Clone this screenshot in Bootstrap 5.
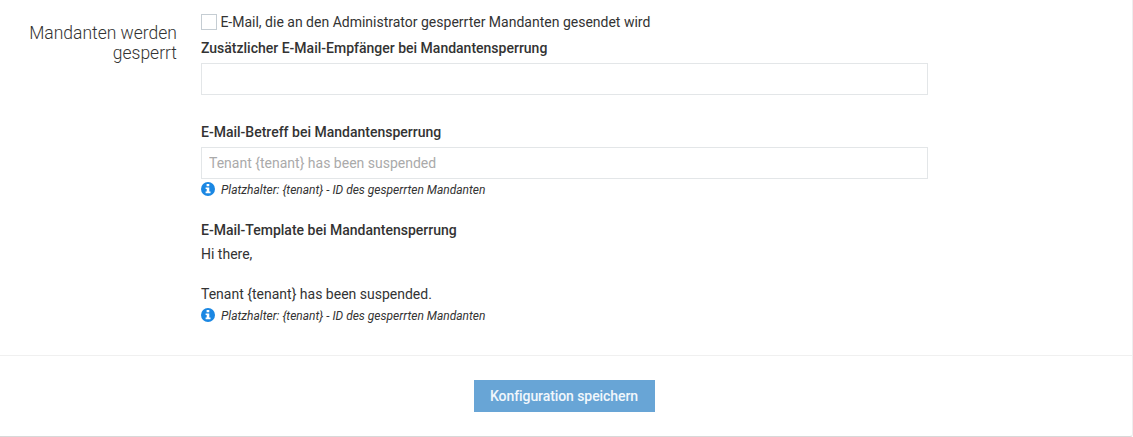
<!DOCTYPE html>
<html lang="de">
<head>
<meta charset="utf-8">
<title>Konfiguration</title>
<link href="https://cdn.jsdelivr.net/npm/bootstrap@5.3.0/dist/css/bootstrap.min.css" rel="stylesheet">
<style>
body{font-family:Roboto,sans-serif;font-size:14px;line-height:20px;color:#333;background:#fff}
.panel{height:437px;border-right:1px solid #eee;border-bottom:1px solid #d8d8d8;border-bottom-right-radius:3px}
.settings{height:355px;padding-top:12px;gap:24px}
.legend-col{width:177px;padding-top:11px}
.legend-col h2{font-size:17.5px;font-weight:300;line-height:20px;color:#333}
.fields{width:727px}
.notify{margin-bottom:6px}
.fields .form-check-input{width:16px;height:16px;margin:2px 3.4px 0 0;border:1px solid #c5cdd3;border-radius:0;flex:none}
.fields .form-label{font-weight:500;line-height:20px;margin-bottom:5px}
.recipient{margin-bottom:27px}
.subject{margin-bottom:20px}
.fields .form-control{height:32px;padding:5px 7px;font-size:14px;line-height:20px;border:1px solid #e3e6e8}
.fields .form-control::placeholder{color:#aaa}
.hint{font-size:12px;font-style:italic;height:20px;margin-top:1px}
.hint svg{width:14px;height:14px;margin:0 6px 2px 0;flex:none}
.template .hint{margin-top:2px}
.actions{border-top:1px solid #f0f0f0;padding:24px 4px 0 0}
.btn-save{width:181px;height:32px;padding:0;font-size:14px;font-weight:500;line-height:31px;letter-spacing:-.08px;border:0;color:#f1f7fc;background:#68a5d6}
</style>
</head>
<body>
<svg class="d-none"><symbol id="info" viewBox="0 0 14 14"><circle cx="7" cy="7" r="7" fill="#1a87e3"/><path fill="#fff" d="M5.600 2h2.700v2.200H5.600zM4.600 5.400h3.700v4.200h1.200v1.600H4.600V9.600h1.100V7H4.600z"/></symbol></svg>
<form class="panel">
  <div class="settings d-flex">
    <div class="legend-col text-end"><h2 class="mb-0">Mandanten werden<br>gesperrt</h2></div>
    <div class="fields">
      <div class="notify d-flex"><input class="form-check-input" type="checkbox" id="admin"><label for="admin">E-Mail, die an den Administrator gesperrter Mandanten gesendet wird</label></div>
      <div class="recipient">
        <label class="form-label d-block" for="to">Zusätzlicher E-Mail-Empfänger bei Mandantensperrung</label>
        <input class="form-control rounded-0" id="to" type="text">
      </div>
      <div class="subject">
        <label class="form-label d-block" for="subject">E-Mail-Betreff bei Mandantensperrung</label>
        <input class="form-control rounded-0" id="subject" type="text" placeholder="Tenant {tenant} has been suspended">
        <div class="hint d-flex align-items-center"><svg><use href="#info"/></svg><span>Platzhalter: {tenant} - ID des gesperrten Mandanten</span></div>
      </div>
      <div class="template">
        <div class="form-label mb-1">E-Mail-Template bei Mandantensperrung</div>
        <div>Hi there,<br><br>Tenant {tenant} has been suspended.</div>
        <div class="hint d-flex align-items-center"><svg><use href="#info"/></svg><span>Platzhalter: {tenant} - ID des gesperrten Mandanten</span></div>
      </div>
    </div>
  </div>
  <div class="actions d-flex justify-content-center"><button type="button" class="btn btn-save rounded-0">Konfiguration speichern</button></div>
</form>
<script src="https://cdn.jsdelivr.net/npm/bootstrap@5.3.0/dist/js/bootstrap.bundle.min.js"></script>
</body>
</html>
